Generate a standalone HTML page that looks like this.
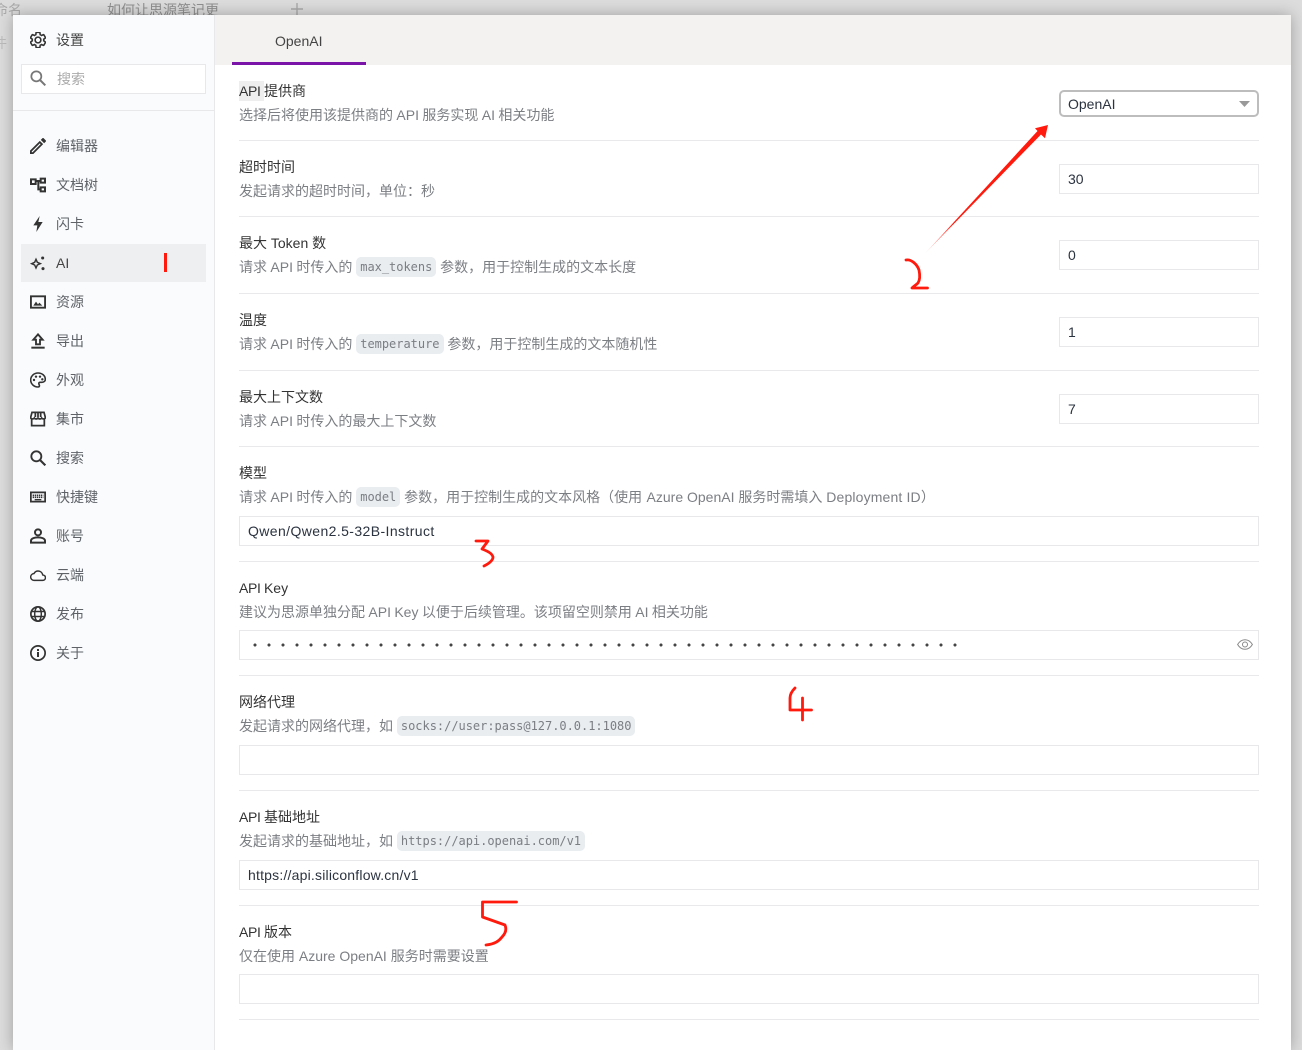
<!DOCTYPE html>
<html lang="zh">
<head>
<meta charset="utf-8">
<title>设置</title>
<style>
html,body{margin:0;padding:0}
body{width:1302px;height:1050px;overflow:hidden;position:relative;background:#dcdcdc;font-family:"Liberation Sans","Noto Sans CJK SC",sans-serif;font-size:14px}
.abs,.t,.d,.box,.hr,.n,.i{position:absolute}
#dlg{position:absolute;left:13px;top:15px;width:1278px;height:1035px;background:#fff;box-shadow:0 0 14px rgba(0,0,0,.28)}
#side{position:absolute;left:13px;top:15px;width:201px;height:1035px;background:#fafbfd;border-right:1px solid #e8e8ea}
#tabbar{position:absolute;left:215px;top:15px;width:1076px;height:50px;background:#f3f2f0}
.t{left:239px;line-height:20px;color:#333;white-space:nowrap;word-spacing:-.5px}
.a{letter-spacing:-.33px}
.d{left:239px;line-height:20px;color:#7b7e83;white-space:nowrap;word-spacing:-.5px}
code{font-family:"DejaVu Sans Mono","Liberation Mono",monospace;font-size:12px;background:#e9edf0;border-radius:5px;padding:3px 4px;margin:0 .5px;color:#7b7e83;position:relative;top:-1px;word-spacing:0;letter-spacing:-.02px}
.box{border:1px solid #e8e8ea;box-sizing:border-box;height:30px;background:#fff;line-height:28px;padding-left:8px;color:#2b3340;white-space:nowrap}
.s{left:1059px;width:200px}
.f{left:239px;width:1020px}
.hr{left:239px;width:1020px;height:1px;background:#e9e9eb}
.n{left:56px;line-height:20px;color:#5f6368;white-space:nowrap}
.i{left:30px;width:16px;height:16px;fill:#333;stroke:none}
.o{fill:none;stroke:#333}
</style>
</head>
<body>
<div class="abs" style="left:-6px;top:1px;line-height:18px;color:#aaa">命名</div>
<div class="abs" style="left:107px;top:1px;line-height:18px;color:#8f8f8f">如何让思源笔记更</div>
<div class="abs" style="left:-7px;top:34px;line-height:18px;color:#bbb">件</div>
<svg class="abs" style="left:290px;top:3px" width="14" height="12"><path d="M7 0V12M1 6H13" stroke="#aaa" stroke-width="1.4"/></svg>

<div id="dlg"></div>
<div id="side"></div>
<div id="tabbar"></div>
<div class="abs" style="left:275px;top:31px;line-height:20px;color:#444">OpenAI</div>
<div class="abs" style="left:232px;top:62px;width:134px;height:3px;background:#7a14a8"></div>

<!-- sidebar head -->
<svg class="i" style="top:32px" viewBox="2 2 20 20"><path class="o" stroke-width="2" d="M19.14 12.94c.04-.3.06-.61.06-.94 0-.32-.02-.64-.07-.94l2.03-1.58a.49.49 0 0 0 .12-.61l-1.92-3.32a.488.488 0 0 0-.59-.22l-2.39.96c-.5-.38-1.03-.7-1.62-.94l-.36-2.54a.484.484 0 0 0-.48-.41h-3.84c-.24 0-.43.17-.47.41l-.36 2.54c-.59.24-1.13.57-1.62.94l-2.39-.96c-.22-.08-.47 0-.59.22L2.74 8.87c-.12.21-.08.47.12.61l2.03 1.58c-.05.3-.09.63-.09.94s.02.64.07.94l-2.03 1.58a.49.49 0 0 0-.12.61l1.92 3.32c.12.22.37.29.59.22l2.39-.96c.5.38 1.03.7 1.62.94l.36 2.54c.05.24.24.41.48.41h3.84c.24 0 .44-.17.47-.41l.36-2.54c.59-.24 1.13-.56 1.62-.94l2.39.96c.22.08.47 0 .59-.22l1.92-3.32c.12-.22.07-.47-.12-.61l-2.01-1.58zM12 15.6c-1.98 0-3.6-1.62-3.6-3.6s1.62-3.6 3.6-3.6 3.6 1.62 3.6 3.6-1.62 3.6-3.6 3.6z"/></svg>
<div class="n" style="top:30px;color:#444">设置</div>
<div class="abs" style="left:21px;top:64px;width:185px;height:30px;box-sizing:border-box;border:1px solid #e8e8ea;background:#fff"></div>
<svg class="i" style="top:70px" viewBox="0 0 24 24"><circle class="o" style="stroke:#777" stroke-width="2.6" cx="9.5" cy="9.5" r="7.5"/><path class="o" style="stroke:#777" stroke-width="3" d="M15 15L23 23"/></svg>
<div class="n" style="left:57px;top:69px;color:#aaa">搜索</div>
<div class="abs" style="left:13px;top:110px;width:201px;height:1px;background:#e8e8ea"></div>

<!-- sidebar items -->
<div class="abs" style="left:21px;top:244px;width:185px;height:38px;background:#eeeff1"></div>
<div class="abs" style="left:164px;top:253px;width:3px;height:19px;background:#ff1a0d"></div>

<svg class="i" style="top:138px" viewBox="3 3 18 18"><path d="M3 17.25V21h3.75L17.81 9.94l-3.75-3.75L3 17.25zM5.92 19H5v-.92l9.06-9.06.92.92L5.92 19zM20.71 7.04c.39-.39.39-1.02 0-1.41l-2.34-2.34a.996.996 0 0 0-1.41 0l-1.83 1.83 3.75 3.75 1.83-1.83z"/></svg>
<div class="n" style="top:136px">编辑器</div>

<svg class="i" style="top:177px" viewBox="0 0 24 24"><path class="o" stroke-width="3" d="M1.500 3.500h7v7h-7zM16 2.500h6.500v6H16zM16 15.500h6.500v6H16zM8.500 6H16M12.500 6V18.500H16"/></svg>
<div class="n" style="top:175px">文档树</div>

<svg class="i" style="top:216px" viewBox="0 0 24 24"><path d="M14.500 0L5 14h6l-1.500 10L19 9h-6.500z"/></svg>
<div class="n" style="top:214px">闪卡</div>

<svg class="i" style="top:255px" viewBox="0 0 24 24"><path class="o" stroke-width="2.2" d="M9 6.500L11 11l4.500 2L11 15l-2 4.500L7 15l-4.500-2L7 11z"/><circle cx="19" cy="4.500" r="2.300"/><circle cx="19.500" cy="20.500" r="2.300"/></svg>
<div class="n" style="top:253px;color:#444">AI</div>

<svg class="i" style="top:294px" viewBox="0 0 24 24"><path class="o" stroke-width="2.800" d="M1.400 3.400h21.200v17.200H1.400z"/><path d="M5 17.500l4-6 3 4 2-2.500 4.500 4.500z"/></svg>
<div class="n" style="top:292px">资源</div>

<svg class="i" style="top:333px" viewBox="0 0 24 24"><path d="M2 20.500h20v3H2z"/><path class="o" stroke-width="2.800" d="M12 2L5 10h4v7h6v-7h4z"/></svg>
<div class="n" style="top:331px">导出</div>

<svg class="i" style="top:372px" viewBox="0 0 24 24"><path class="o" stroke-width="2.400" d="M12 1.500C5.800 1.500 1 6.300 1 12s4.800 10.500 11 10.500c1.500 0 2.200-1 2.200-2 0-1.400-1-1.700-1-3 0-1.200 1-2 2.200-2H18c2.800 0 5-2 5-4.500C23 5.500 18 1.500 12 1.500z"/><circle cx="6" cy="12" r="1.800"/><circle cx="9" cy="7" r="1.800"/><circle cx="15" cy="7" r="1.800"/><circle cx="18.500" cy="11" r="1.800"/></svg>
<div class="n" style="top:370px">外观</div>

<svg class="i" style="top:411px" viewBox="0 0 24 24"><path class="o" stroke-width="2.600" d="M3 2h18l2 7.500c0 3-4 3-5.500 1-1.300 2-3.700 2-5.500 0-1.800 2-4.200 2-5.500 0C5 12.500 1 12.500 1 9.500zM2.500 12v10h19V12M8 3v6M12 3v6M16 3v6"/></svg>
<div class="n" style="top:409px">集市</div>

<svg class="i" style="top:450px" viewBox="0 0 24 24"><circle class="o" stroke-width="2.800" cx="9.500" cy="9.500" r="7.500"/><path class="o" stroke-width="3.200" d="M15 15L23 23"/></svg>
<div class="n" style="top:448px">搜索</div>

<svg class="i" style="top:489px" viewBox="0 0 24 24"><path class="o" stroke-width="2.600" d="M1.300 5h21.400v14H1.300z"/><path class="o" stroke-width="2.400" stroke-dasharray="2 1" d="M4 9.500h16M4 12.500h16"/><path class="o" stroke-width="2" d="M7 16h10"/></svg>
<div class="n" style="top:487px">快捷键</div>

<svg class="i" style="top:528px" viewBox="0 0 24 24"><circle class="o" stroke-width="3" cx="12" cy="6.500" r="4.500"/><path class="o" stroke-width="3" d="M1.500 22v-3c0-3.500 6-5 10.500-5s10.500 1.500 10.500 5v3z"/></svg>
<div class="n" style="top:526px">账号</div>

<svg class="i" style="top:567px" viewBox="0 0 24 24"><path class="o" stroke-width="2.200" d="M6 20h13c2.500 0 4.200-1.800 4.200-4s-1.700-3.800-4-4c-.7-3.500-3.500-6-7-6-2.800 0-5 1.500-6.200 3.800C2.900 10.200 1 12.500 1 15c0 2.800 2.200 5 5 5z"/></svg>
<div class="n" style="top:565px">云端</div>

<svg class="i" style="top:606px" viewBox="0 0 24 24"><circle class="o" stroke-width="2.600" cx="12" cy="12" r="10.700"/><ellipse class="o" stroke-width="2.200" cx="12" cy="12" rx="5" ry="10.800"/><path class="o" stroke-width="2.200" d="M1.800 8.200h20.400M1.800 15.800h20.400"/></svg>
<div class="n" style="top:604px">发布</div>

<svg class="i" style="top:645px" viewBox="0 0 24 24"><circle class="o" stroke-width="2.600" cx="12" cy="12" r="10.700"/><path d="M10.500 10.500h3V18h-3zM10.500 6h3v3h-3z"/></svg>
<div class="n" style="top:643px">关于</div>

<!-- content -->
<div class="abs" style="left:239px;top:81px;width:25px;height:20px;background:#eee"></div>
<div class="t" style="top:81px"><span class="a">API</span> 提供商</div>
<div class="d" style="top:105px">选择后将使用该提供商的 API 服务实现 AI 相关功能</div>
<div class="box s" style="top:90px;height:27px;border:2px solid #bdbdbd;border-radius:5px;line-height:24px;padding-left:7px">OpenAI</div>
<svg class="abs" style="left:1239px;top:101px" width="11" height="6"><path d="M0 0H11L5.500 6z" fill="#999"/></svg>
<div class="hr" style="top:140px"></div>

<div class="t" style="top:157px">超时时间</div>
<div class="d" style="top:181px">发起请求的超时时间，单位：秒</div>
<div class="box s" style="top:164px">30</div>
<div class="hr" style="top:216px"></div>

<div class="t" style="top:233px;word-spacing:0">最大 Token 数</div>
<div class="d" style="top:257px">请求 API 时传入的 <code>max_tokens</code> 参数，用于控制生成的文本长度</div>
<div class="box s" style="top:240px">0</div>
<div class="hr" style="top:293px"></div>

<div class="t" style="top:310px">温度</div>
<div class="d" style="top:334px">请求 API 时传入的 <code>temperature</code> 参数，用于控制生成的文本随机性</div>
<div class="box s" style="top:317px">1</div>
<div class="hr" style="top:370px"></div>

<div class="t" style="top:387px">最大上下文数</div>
<div class="d" style="top:411px">请求 API 时传入的最大上下文数</div>
<div class="box s" style="top:394px">7</div>
<div class="hr" style="top:446px"></div>

<div class="t" style="top:463px">模型</div>
<div class="d" style="top:487px">请求 API 时传入的 <code>model</code> 参数，用于控制生成的文本风格（使用<span style="margin-left:.5px;word-spacing:0"> Azure OpenAI 服务时需填入 <span style="letter-spacing:.15px">Deployment ID</span></span>）</div>
<div class="box f" style="top:516px;letter-spacing:.4px">Qwen/Qwen2.5-32B-Instruct</div>
<div class="hr" style="top:561px"></div>

<div class="t" style="top:578px"><span class="a">API</span> Key</div>
<div class="d" style="top:602px">建议为思源单独分配 API Key 以便于后续管理。该项留空则禁用 AI 相关功能</div>
<div class="box f" style="top:630px"></div>
<div class="abs" style="left:248px;top:641px;width:714px;height:8px;background:radial-gradient(circle at 7px 4px,#444 1.300px,transparent 1.800px) 0 0/14px 8px repeat-x"></div>
<svg class="abs" style="left:1237px;top:638px" width="16" height="13" viewBox="0 0 16 13"><path d="M.6 6.500C2.500 3.300 5 1.700 8 1.700s5.500 1.600 7.400 4.800C13.500 9.700 11 11.300 8 11.300S2.500 9.700.6 6.500z" fill="none" stroke="#888"/><circle cx="8" cy="6.500" r="2.500" fill="none" stroke="#888"/></svg>
<div class="hr" style="top:675px"></div>

<div class="t" style="top:692px">网络代理</div>
<div class="d" style="top:716px">发起请求的网络代理，如 <code>socks://user:pass@127.0.0.1:1080</code></div>
<div class="box f" style="top:745px"></div>
<div class="hr" style="top:790px"></div>

<div class="t" style="top:807px"><span class="a">API</span> 基础地址</div>
<div class="d" style="top:831px">发起请求的基础地址，如 <code>https://api.openai.com/v1</code></div>
<div class="box f" style="top:860px;letter-spacing:.2px">https://api.siliconflow.cn/v1</div>
<div class="hr" style="top:905px"></div>

<div class="t" style="top:922px"><span class="a">API</span> 版本</div>
<div class="d" style="top:946px;word-spacing:0">仅在使用 Azure OpenAI 服务时需要设置</div>
<div class="box f" style="top:974px"></div>
<div class="hr" style="top:1019px"></div>

<!-- hand-drawn red annotations -->
<svg class="abs" style="left:0;top:0;pointer-events:none" width="1302" height="1050" viewBox="0 0 1302 1050">
<defs><linearGradient id="fade" x1="925" y1="253" x2="1040" y2="133" gradientUnits="userSpaceOnUse"><stop offset="0" stop-color="#ff1a0d" stop-opacity=".15"/><stop offset=".25" stop-color="#ff1a0d"/></linearGradient></defs>
<path d="M925 253.500L1037.500 131 1035 128.300 1048 125 1045 138.300 1041 134.500z" fill="url(#fade)"/>
<g fill="none" stroke="#ff1a0d" stroke-width="2.800" stroke-linejoin="round" stroke-linecap="round">
<path d="M906 260C911 259 917 264 919 270C920 275 920 280 918 283C916 285 914 286 912 288H927.500"/>
<path d="M476 541H488L482 549C487 551 492 553 493 557C493 561 488 564 484 566"/>
<path d="M795 688C792 691 790 695 790 698V710H811.500M802.500 698V720"/>
<path d="M516.500 902H482.500V917L505 925C507 930 505 934 502 937C499 941 495 944 486 945"/>
</g>
</svg>
</body>
</html>
